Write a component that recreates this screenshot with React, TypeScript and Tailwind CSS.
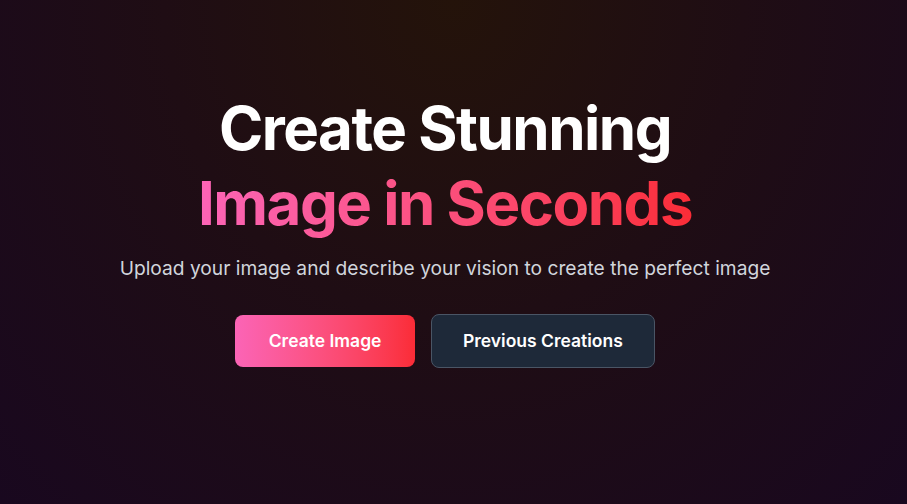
export default function App() {
  return (
    <main
      className="min-h-screen w-full bg-[#1b0b19] bg-[radial-gradient(ellipse_at_top,#24130a_0%,#1f0d14_45%,#19081f_100%)] flex flex-col items-center pt-[91px] pr-[17px] text-center"
      style={{ fontFamily: 'Inter, "Noto Sans", sans-serif' }}
    >
      {/* Headline */}
      <h1 className="font-bold text-[60px] leading-[75px] tracking-tight">
        <span className="text-white">Create Stunning</span>
        <br />
        <span className="bg-gradient-to-r from-pink-400 to-red-500 bg-clip-text text-transparent">
          Image in Seconds
        </span>
      </h1>

      <p className="mt-[13px] text-[19.2px] leading-7 text-gray-300">
        Upload your image and describe your vision to create the perfect image
      </p>

      {/* Actions */}
      <div className="mt-8 flex items-center gap-4">
        <button className="rounded-lg bg-gradient-to-r from-pink-400 to-red-500 px-[33.5px] py-3 text-[17.5px] leading-7 font-semibold text-white">
          Create Image
        </button>
        <button className="rounded-lg border border-gray-600 bg-gray-800 px-[31px] py-3 text-[17.5px] leading-7 font-semibold text-white">
          Previous Creations
        </button>
      </div>
    </main>
  );
}
